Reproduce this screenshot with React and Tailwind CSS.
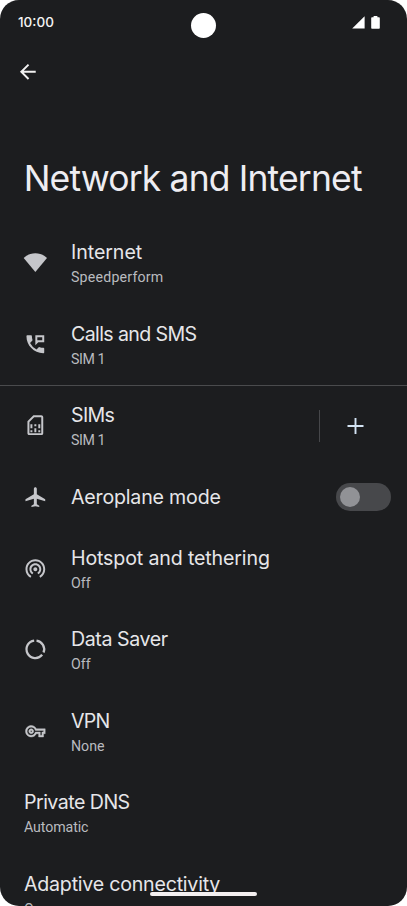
import React from "react";

const title = "font-['Inter',sans-serif] text-[19.6px] leading-[26px] text-[#e6e6e9] whitespace-nowrap";
const sub = "font-['Roboto',sans-serif] text-[14.2px] leading-[20px] text-[#b9bbbf] whitespace-nowrap mt-[2px]";

function Icon({ children }) {
  return (
    <svg viewBox="0 0 24 24" className="size-[23.7px] shrink-0 -translate-x-[0.5px] translate-y-[0.4px] overflow-visible text-[#c5c6ca]" fill="currentColor">
      {children}
    </svg>
  );
}

const wifi = <path d="M12 3C7.3 3 3.1 4.8.2 7.6L12 22 23.8 7.6C20.9 4.8 16.7 3 12 3z" />;
const calls = (
  <>
    <path d="M20 15.5c-1.25 0-2.45-.2-3.57-.57a1.02 1.02 0 0 0-1.02.24l-2.2 2.2a15.05 15.05 0 0 1-6.59-6.59l2.2-2.2c.28-.27.36-.66.25-1.02A11.36 11.36 0 0 1 8.5 4c0-.55-.45-1-1-1H4c-.55 0-1 .45-1 1 0 9.39 7.61 17 17 17 .55 0 1-.45 1-1v-3.5c0-.55-.45-1-1-1z" />
    <path fillRule="evenodd" d="M12 3v10l3-3h6V3h-9zm2 2h5v3h-5V5z" />
  </>
);
const sim = (
  <path d="M18 2h-8L4 8v12c0 1.1.9 2 2 2h12c1.1 0 2-.9 2-2V4c0-1.1-.9-2-2-2zm0 2v16H6V8.83L10.83 4H18zM7 17h2v2H7zm8 0h2v2h-2zm-8-6h2v4H7zm4 4h2v4h-2zm0-4h2v2h-2zm4 0h2v4h-2z" />
);
const plane = (
  <path d="M22 16v-2l-8.5-5V3.5c0-.83-.67-1.5-1.5-1.5s-1.5.67-1.5 1.5V9L2 14v2l8.5-2.5V19L8 20.5V22l4-1 4 1v-1.5L13.5 19v-5.5L22 16z" />
);
const hotspot = (
  <path d="M12 11c-1.1 0-2 .9-2 2s.9 2 2 2 2-.9 2-2-.9-2-2-2zm6 2c0-3.31-2.69-6-6-6s-6 2.69-6 6c0 2.22 1.21 4.15 3 5.19l1-1.74c-1.19-.7-2-1.97-2-3.45 0-2.21 1.79-4 4-4s4 1.79 4 4c0 1.48-.81 2.75-2 3.45l1 1.74c1.79-1.04 3-2.97 3-5.19zM12 3C6.48 3 2 7.48 2 13c0 3.7 2.01 6.92 4.99 8.65l1-1.73C5.61 18.53 4 15.96 4 13c0-4.42 3.58-8 8-8s8 3.58 8 8c0 2.96-1.61 5.53-4 6.92l1 1.73c2.99-1.73 5-4.95 5-8.65 0-5.52-4.48-10-10-10z" />
);
const saver = (
  <g fill="none" stroke="currentColor" strokeWidth="2.3">
    <path d="M13.2 3.2A8.9 8.9 0 0 1 20.3 15.3" />
    <path d="M18.9 17.6A8.9 8.9 0 1 1 10.8 3.2" />
  </g>
);
const vpn = (
  <path stroke="currentColor" strokeWidth=".5" d="M22 19h-6v-4h-2.68c-1.14 2.42-3.6 4-6.32 4-3.86 0-7-3.14-7-7s3.14-7 7-7c2.72 0 5.17 1.58 6.32 4H24v6h-2v4zm-4-2h2v-4h2v-2H11.94l-.23-.67C11.01 8.34 9.11 7 7 7c-2.76 0-5 2.24-5 5s2.24 5 5 5c2.11 0 4.01-1.34 4.71-3.33l.23-.67H18v4zM7 15c-1.65 0-3-1.35-3-3s1.35-3 3-3 3 1.35 3 3-1.35 3-3 3zm0-4c-.55 0-1 .45-1 1s.45 1 1 1 1-.45 1-1-.45-1-1-1z" transform="translate(2 2) scale(.833)" />
);

function Row({ icon, label, detail, track = "", subTrack = "", children }) {
  return (
    <div className={`flex shrink-0 items-center pl-[24px] ${detail ? "h-[81.5px]" : "h-[61px]"}`}>
      {icon && <div className="flex w-[47px] shrink-0"><Icon>{icon}</Icon></div>}
      <div className={`flex-1 ${detail ? "pt-[2px]" : ""}`}>
        <div className={`${title} ${track}`}>{label}</div>
        {detail && <div className={`${sub} ${subTrack}`}>{detail}</div>}
      </div>
      {children}
    </div>
  );
}

export default function App() {
  return (
    <div className="h-[906px] w-[407px] bg-white">
      <div className="relative flex h-full flex-col overflow-hidden rounded-[19px] bg-[#1c1d1f]">
        <header className="grid h-[52px] shrink-0 grid-cols-3 pl-[18px] pr-[27px]">
          <span className="pt-[12px] font-['Inter',sans-serif] text-[13.5px] leading-[20px] font-medium text-[#f4f4f4]">10:00</span>
          <span className="ml-[52px] mt-[13px] size-[25px] rounded-full bg-white" />
          <span className="flex justify-end gap-[6px] pt-[16px]">
            <svg viewBox="0 0 13 13" className="size-[13px]" fill="#fff"><path d="M12.6.2v12.4H.2z" /></svg>
            <svg viewBox="0 0 9 13" className="h-[13px] w-[9px]" fill="#fff"><path d="M2.6 0h3.8v1.2H8q.8 0 .8.8v10q0 .8-.8.8H1q-.8 0-.8-.8V2q0-.8.8-.8h1.6z" /></svg>
          </span>
        </header>
        <div className="h-[102px] shrink-0 pl-[16px] pt-[8px]">
          <svg viewBox="0 0 24 24" className="size-[23.7px]" fill="#f1f1f1"><path d="M20 11H7.83l5.59-5.59L12 4l-8 8 8 8 1.41-1.41L7.83 13H20v-2z" /></svg>
        </div>
        <h1 className="h-[67.5px] shrink-0 whitespace-nowrap pl-[23.7px] pt-px font-['Inter',sans-serif] text-[35.5px] leading-[48px] font-normal tracking-[-0.85px] text-[#eeedf2]">Network and Internet</h1>
        <Row icon={wifi} label="Internet" detail="Speedperform" track="tracking-[-0.06px]" subTrack="tracking-[0.2px]" />
        <Row icon={calls} label="Calls and SMS" detail="SIM 1" track="tracking-[-0.62px]" subTrack="tracking-[-0.45px]" />
        <div className="-mb-px h-px shrink-0 bg-[#4a4b4d]" />
        <Row icon={sim} label="SIMs" detail="SIM 1" track="tracking-[-0.65px]" subTrack="tracking-[-0.45px]">
          <div className="mt-px flex h-[32px] w-[88px] items-center border-l border-[#46474a] pl-[26.5px]">
            <svg viewBox="0 0 18 18" className="size-[18px] -translate-x-[0.5px]" stroke="#d3e3f3" strokeWidth="1.9"><path d="M9 1v16M1 9h16" /></svg>
          </div>
        </Row>
        <Row icon={plane} label="Aeroplane mode" track="tracking-[-0.19px]">
          <div className="mr-[16px] flex h-[28px] w-[55px] items-center rounded-full bg-[#47484b] pl-[4px]">
            <div className="size-[20px] rounded-full bg-[#919296]" />
          </div>
        </Row>
        <Row icon={hotspot} label="Hotspot and tethering" detail="Off" track="tracking-[-0.14px]" />
        <Row icon={saver} label="Data Saver" detail="Off" track="tracking-[-0.42px]" />
        <Row icon={vpn} label="VPN" detail="None" track="tracking-[-0.8px]" />
        <Row label="Private DNS" detail="Automatic" track="tracking-[-0.53px]" subTrack="tracking-[-0.1px]" />
        <Row label="Adaptive connectivity" detail="On" track="tracking-[-0.22px]" />
        <div className="absolute bottom-[10px] left-[150px] h-[4px] w-[107px] rounded-full bg-[#f3eff0]" />
      </div>
    </div>
  );
}
